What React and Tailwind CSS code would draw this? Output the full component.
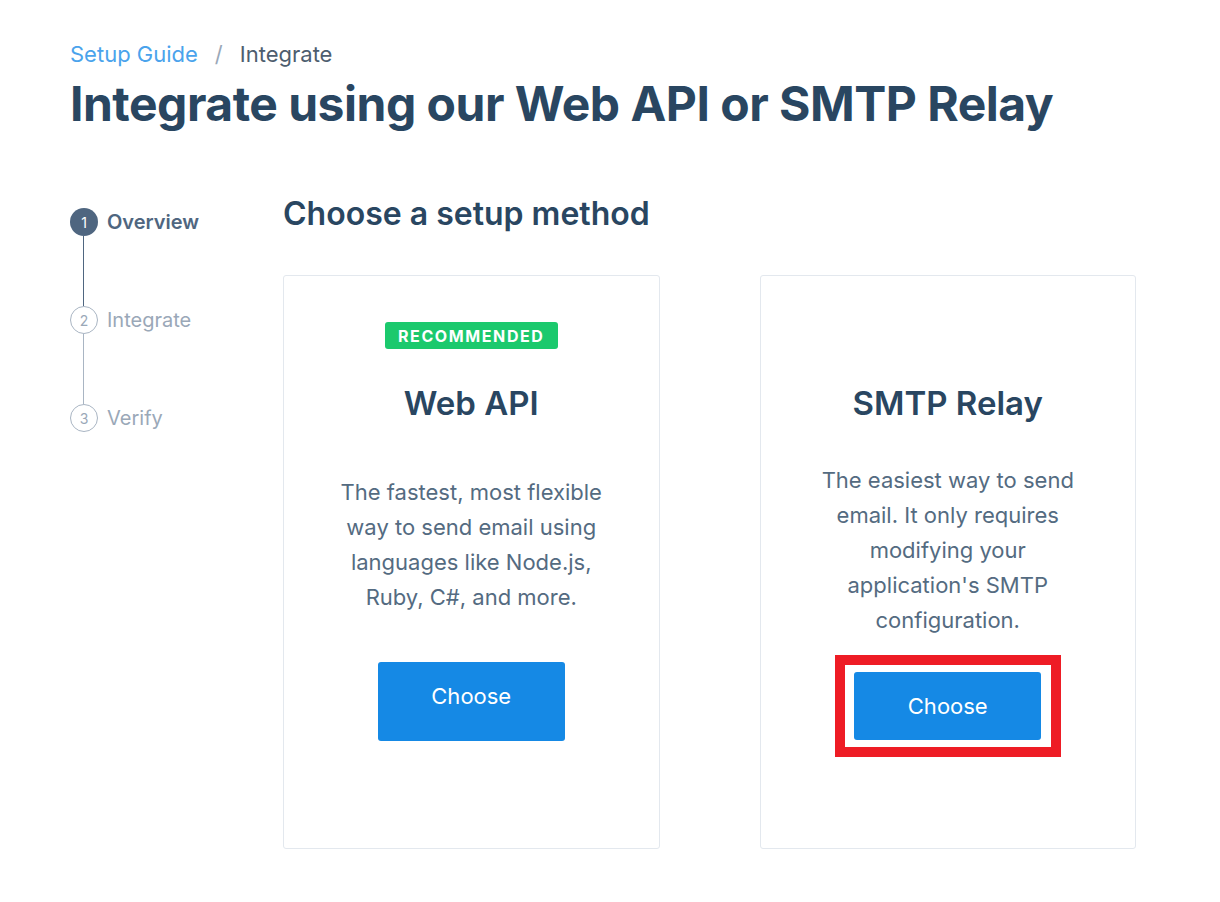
const font = { fontFamily: "Inter, 'Open Sans', sans-serif" };

function Step({ n, label, active, last }) {
  return (
    <div className="flex flex-col">
      <div className="flex h-[28px] items-center gap-[9px]">
        {active ? (
          <span className="flex h-[28px] w-[28px] items-center justify-center rounded-full bg-[#4f6680] text-[14px] text-white">
            {n}
          </span>
        ) : (
          <span className="flex h-[28px] w-[28px] items-center justify-center rounded-full border border-[#a9b5c3] text-[14px] text-[#9aa8b8]">
            {n}
          </span>
        )}
        <span
          className={
            active
              ? "text-[20px] font-semibold leading-[28px] text-[#4f6680]"
              : "text-[20px] leading-[28px] text-[#9aa8b8]"
          }
        >
          {label}
        </span>
      </div>
      {!last && (
        <div
          className={
            active
              ? "ml-[13px] h-[70px] w-px bg-[#4f6680]"
              : "ml-[13px] h-[70px] w-px bg-[#a9b5c3]"
          }
        />
      )}
    </div>
  );
}

function ChooseButton({ tall }) {
  return (
    <button
      className={
        tall
          ? "h-[79px] w-[187px] rounded-[3px] bg-[#1589e5] pb-[11px] text-[22px] text-white"
          : "h-[68px] w-[187px] rounded-[3px] bg-[#1589e5] text-[22px] text-white"
      }
    >
      Choose
    </button>
  );
}

export default function App() {
  return (
    <div className="min-h-screen bg-white pl-[70px] pt-[39px]" style={font}>
      {/* Breadcrumb */}
      <div className="flex items-center text-[22px] leading-[30px]">
        <span className="text-[#4aa3ec]">Setup Guide</span>
        <span className="mx-[17px] text-[#9aa8b8]">/</span>
        <span className="text-[#4d5d6e]">Integrate</span>
      </div>
      <h1 className="mt-[6px] text-[48px] font-bold leading-[58px] tracking-[-0.5px] text-[#294661]">
        Integrate using our Web API or SMTP Relay
      </h1>

      <div className="mt-[61px] flex">
        {/* Steps */}
        <div className="w-[213px] shrink-0 pt-[14px]">
          <Step n="1" label="Overview" active />
          <Step n="2" label="Integrate" />
          <Step n="3" label="Verify" last />
        </div>

        {/* Main */}
        <div className="w-[853px]">
          <h2 className="text-[32px] font-semibold leading-[40px] text-[#294661]">
            Choose a setup method
          </h2>
          <div className="mt-[41px] grid grid-cols-2 gap-[100px]">
            {/* Web API card */}
            <div className="flex h-[574px] flex-col items-center rounded-[3px] border border-[#e3e8ee] pt-[46px]">
              <span className="flex h-[27px] items-center rounded-[3px] bg-[#1bc96d] px-[13px] text-[16px] font-bold tracking-[1.6px] text-white">
                RECOMMENDED
              </span>
              <h3 className="mt-[33px] text-[33px] font-semibold leading-[43px] text-[#294661]">
                Web API
              </h3>
              <p className="mt-[50px] text-center text-[22px] leading-[35px] text-[#546b81]">
                The fastest, most flexible
                <br />
                way to send email using
                <br />
                languages like Node.js,
                <br />
                Ruby, C#, and more.
              </p>
              <div className="mt-[47px]">
                <ChooseButton tall />
              </div>
            </div>

            {/* SMTP card */}
            <div className="flex h-[574px] flex-col items-center rounded-[3px] border border-[#e3e8ee] pt-[46px]">
              <div className="h-[27px]" />
              <h3 className="mt-[33px] text-[33px] font-semibold leading-[43px] text-[#294661]">
                SMTP Relay
              </h3>
              <p className="mt-[38px] text-center text-[22px] leading-[35px] text-[#546b81]">
                The easiest way to send
                <br />
                email. It only requires
                <br />
                modifying your
                <br />
                application's SMTP
                <br />
                configuration.
              </p>
              <div className="mt-[17px] flex h-[102px] w-[226px] items-center justify-center border-[10px] border-[#ee1c25]">
                <ChooseButton />
              </div>
            </div>
          </div>
        </div>
      </div>
    </div>
  );
}
